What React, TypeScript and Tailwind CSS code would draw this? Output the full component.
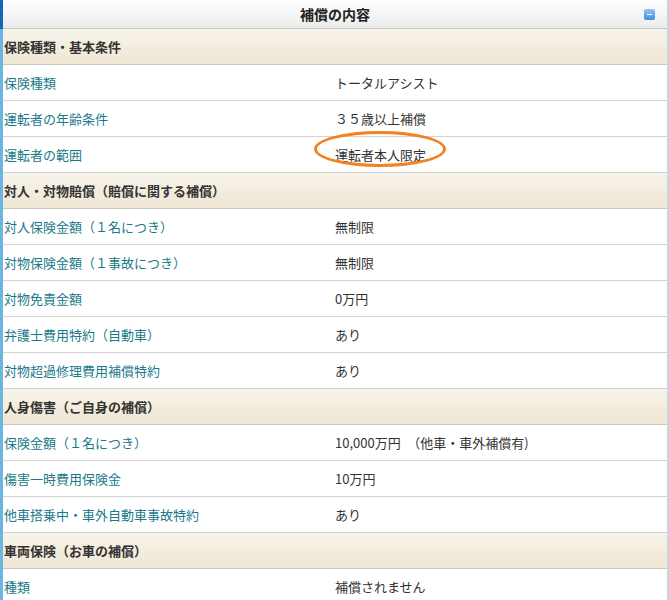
const rows: [string, string?][] = [
  ['保険種類・基本条件'],
  ['保険種類', 'トータルアシスト'],
  ['運転者の年齢条件', '３５歳以上補償'],
  ['運転者の範囲', '運転者本人限定'],
  ['対人・対物賠償（賠償に関する補償）'],
  ['対人保険金額（１名につき）', '無制限'],
  ['対物保険金額（１事故につき）', '無制限'],
  ['対物免責金額', '0万円'],
  ['弁護士費用特約（自動車）', 'あり'],
  ['対物超過修理費用補償特約', 'あり'],
  ['人身傷害（ご自身の補償）'],
  ['保険金額（１名につき）', '10,000万円　（他車・車外補償有)'],
  ['傷害一時費用保険金', '10万円'],
  ['他車搭乗中・車外自動車事故特約', 'あり'],
  ['車両保険（お車の補償）'],
  ['種類', '補償されません'],
];

export default function App() {
  return (
    <div className="w-[669px] h-[600px] overflow-hidden flex bg-white text-[13px]" style={{ fontFamily: '"Noto Sans CJK JP", "Noto Sans", sans-serif' }}>
      <div className="w-[3px] flex flex-col">
        <div className="h-[29px] bg-[#1466b8]" />
        <div className="flex-1 bg-[#6bb6e0]" />
      </div>
      <div className="flex-1 flex flex-col">
        <div className="h-[29px] shrink-0 flex items-center justify-center relative bg-gradient-to-b from-white to-[#ececec] border-b border-[#c8c8c8]">
          <span className="font-bold text-[14px] text-[#222]">補償の内容</span>
          <div className="absolute right-[12px] top-[9px] w-[11px] h-[11px] rounded-[2px] bg-gradient-to-b from-[#8ec4f2] to-[#3d8fe0] flex items-center justify-center">
            <div className="w-[5px] h-[1px] bg-white" />
          </div>
        </div>
        {rows.map(([label, value], i) =>
          value === undefined ? (
            <div key={i} className="h-[36px] shrink-0 flex items-center px-[1px] bg-gradient-to-b from-[#f8f4ea] to-[#efe6d4] border-b border-[#c8c8c8] font-bold text-[#333]">
              {label}
            </div>
          ) : (
            <div key={i} className="h-[36px] shrink-0 flex items-center border-b border-[#d4d4d4]">
              <div className="w-[332px] pl-[1px] text-[#1a7a8a]">{label}</div>
              <div className="relative text-[#333]">
                {value}
                {i === 3 && (
                  <div className="absolute left-[-21px] top-[-14px] w-[132px] h-[36px] rounded-[50%] border-[3px] border-[#f58220]" />
                )}
              </div>
            </div>
          )
        )}
      </div>
      <div className="w-[2px] bg-[#c8d4e0]" />
    </div>
  );
}
